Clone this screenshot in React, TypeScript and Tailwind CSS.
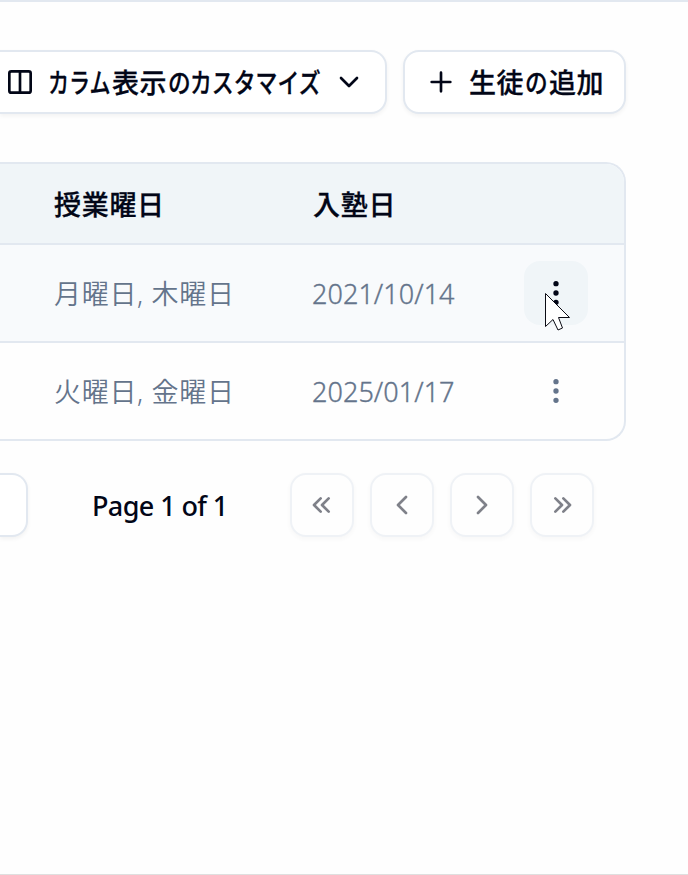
import type { ReactNode } from "react";

const fontStack = "font-['Noto_Sans','Noto_Sans_CJK_JP',sans-serif]";

function Icon({ children, className = "" }: { children: ReactNode; className?: string }) {
  return (
    <svg
      viewBox="0 0 24 24"
      className={`block size-8 shrink-0 ${className}`}
      fill="none"
      stroke="currentColor"
      strokeWidth="2"
      strokeLinecap="round"
      strokeLinejoin="round"
    >
      {children}
    </svg>
  );
}

function DotsVertical() {
  return (
    <Icon>
      <circle cx="12" cy="12" r="1" />
      <circle cx="12" cy="19" r="1" />
      <circle cx="12" cy="5" r="1" />
    </Icon>
  );
}

function Row({ days, date, active = false }: { days: string; date: string; active?: boolean }) {
  return (
    <div className={`flex h-24 items-center text-[#64748b] ${active ? "bg-[#f8fafc]" : ""}`}>
      <div className="w-[259px] pt-0.5 pl-[54px] text-[27px] font-[350] tracking-[0.7px] whitespace-nowrap">
        {days}
      </div>
      <div className="w-[265px] pt-[3px] pl-[53px] text-[27px] font-[350] tracking-[0.05px] whitespace-nowrap [-webkit-text-stroke:0.35px]">
        {date}
      </div>
      <div
        className={`flex size-16 items-center justify-center rounded-2xl ${
          active ? "bg-[#f0f5f8] text-[#020617]" : ""
        }`}
      >
        <DotsVertical />
      </div>
    </div>
  );
}

const pagers = [
  ["M11 7l-5 5l5 5", "M17 7l-5 5l5 5"],
  ["M15 6l-6 6l6 6"],
  ["M9 6l6 6l-6 6"],
  ["M7 7l5 5l-5 5", "M13 7l5 5l-5 5"],
];

export default function App() {
  return (
    <div
      className={`relative flex h-[875px] w-[688px] flex-col overflow-hidden border-t-2 border-b border-t-[#e2e8f0] border-b-[#dfdfdf] bg-[#fefefe] text-[#020617] ${fontStack}`}
    >
      <div className="mt-12 flex gap-4">
        <button className="flex h-16 w-[387px] items-center rounded-r-2xl border-2 border-l-0 border-[#e2e8f0] bg-white pl-1 shadow-[0_2px_4px_rgba(0,0,0,0.05)]">
          <Icon>
            <rect x="4" y="4" width="16" height="16" rx="1.5" />
            <path d="M12 4v16" />
          </Icon>
          <span className="ml-3 flex w-[273px] pt-0.5 text-left text-[27px] leading-8 font-medium whitespace-nowrap [-webkit-text-stroke:0.3px]">
            <span className="w-[64px] origin-left scale-x-[0.78]">カラム</span>
            <span className="w-[56px] tracking-[0.6px]">表示</span>
            <span className="w-[22px] origin-left scale-x-[0.84]">の</span>
            <span className="w-[131px] origin-left scale-x-[0.81]">カスタマイズ</span>
          </span>
          <Icon className="ml-3">
            <path d="M6 9l6 6l6 -6" />
          </Icon>
        </button>
        <button className="flex h-16 w-[223px] items-center rounded-2xl border-2 border-[#e2e8f0] bg-white pl-5 shadow-[0_2px_4px_rgba(0,0,0,0.05)]">
          <Icon>
            <path d="M12 5v14M5 12h14" />
          </Icon>
          <span className="ml-3 flex pt-0.5 text-left text-[27px] leading-8 font-medium whitespace-nowrap [-webkit-text-stroke:0.3px]">
            <span className="w-[56px] tracking-[0.6px]">生徒</span>
            <span className="w-[24px] origin-left scale-x-[0.84]">の</span>
            <span className="tracking-[0.6px]">追加</span>
          </span>
        </button>
      </div>

      <div className="mt-12 w-[626px] overflow-hidden rounded-r-[20px] border-2 border-l-0 border-[#e2e8f0]">
        <div className="flex h-[81px] items-center border-b-2 border-[#e2e8f0] bg-[#f0f5f8] pt-[3px] text-[27px] font-medium tracking-[0.7px] [-webkit-text-stroke:0.3px]">
          <div className="w-[259px] pl-[54px]">授業曜日</div>
          <div className="pl-[54px]">入塾日</div>
        </div>
        <Row days="月曜日, 木曜日" date="2021/10/14" active />
        <div className="h-0.5 bg-[#e2e8f0]" />
        <Row days="火曜日, 金曜日" date="2025/01/17" />
      </div>

      <div className="mt-8 flex h-16 items-center">
        <div className="h-16 w-7 rounded-r-2xl border-2 border-l-0 border-[#e2e8f0] bg-white shadow-[0_2px_4px_rgba(0,0,0,0.05)]" />
        <div className="w-[262px] pt-0.5 pl-16 text-[27px] font-medium tracking-[-0.6px] whitespace-nowrap">
          Page 1 of 1
        </div>
        <div className="flex gap-4">
          {pagers.map((paths) => (
            <button
              key={paths.join()}
              className="flex size-16 items-center justify-center rounded-2xl border-2 border-[#e2e8f0] bg-white opacity-50 shadow-[0_2px_4px_rgba(0,0,0,0.05)]"
            >
              <Icon>
                {paths.map((d) => (
                  <path key={d} d={d} />
                ))}
              </Icon>
            </button>
          ))}
        </div>
      </div>

      <svg className="absolute top-[290px] left-[544px]" width="28" height="42" viewBox="0 0 28 42">
        <path
          d="M1.5 1.5V34.5L9 27.5L14 38L18.5 36L14.5 25.5H25.5Z"
          fill="white"
          stroke="#0b0b14"
          strokeWidth="1"
        />
      </svg>
    </div>
  );
}
